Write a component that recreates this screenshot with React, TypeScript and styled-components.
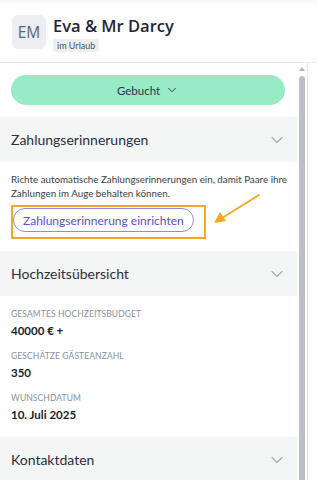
import React from 'react'
import styled, { createGlobalStyle } from 'styled-components'
import { ChevronDown } from 'lucide-react'

const GlobalStyle = createGlobalStyle`
	html, body {
		margin: 0;
		padding: 0;
		background: #fff;
		overflow: hidden;
	}
	body {
		font-family: Lato, 'Open Sans', sans-serif;
		color: #2b2e45;
	}
`

const Page = styled.div`
	width: 317px;
	height: 480px;
	display: flex;
	flex-direction: column;
	overflow: hidden;
`
const Header = styled.header`
	flex: none;
	height: 63px;
	box-sizing: border-box;
	border-top: 3px solid #f5f6f8;
	border-bottom: 1px solid #e7e8eb;
	display: flex;
	align-items: flex-start;
	gap: 7px;
	padding: 12px 12px 0;
`
const Avatar = styled.div`
	width: 34px;
	height: 34px;
	border-radius: 6px;
	background: #eceef1;
	color: #5a6378;
	font-family: 'Open Sans', sans-serif;
	font-size: 15.5px;
	display: flex;
	align-items: center;
	justify-content: center;
`
const NameBlock = styled.div`
	display: flex;
	flex-direction: column;
	align-items: flex-start;
	gap: 2px;
`
const Name = styled.h1`
	margin: 0;
	font-family: 'Open Sans', sans-serif;
	font-size: 16.5px;
	line-height: 22px;
	font-weight: 600;
	color: #1f2638;
`
const Badge = styled.span`
	font-size: 9px;
	line-height: 13px;
	padding: 0 4px;
	border-radius: 3px;
	background: #eceef1;
	color: #4b5263;
`
const Body = styled.div`
	flex: 1;
	display: flex;
	min-height: 0;
`
const Main = styled.div`
	width: 297px;
	overflow: hidden;
`
const Rail = styled.div`
	width: 10px;
	border-right: 1px solid #e6e7ea;
	display: flex;
	flex-direction: column;
	align-items: center;
	padding-top: 4px;
`
const RailArrow = styled.div`
	width: 0;
	height: 0;
	border-left: 3px solid transparent;
	border-right: 3px solid transparent;
	border-bottom: 4px solid #b4b7bd;
	margin-bottom: 5px;
`
const Thumb = styled.div`
	flex: 1;
	width: 6px;
	border-radius: 3px 3px 0 0;
	background: #bdc0c6;
`
const Content = styled.div`
	padding-top: 12px;
`
const StatusButton = styled.button`
	display: flex;
	align-items: center;
	justify-content: center;
	gap: 5px;
	width: 274px;
	height: 30px;
	margin: 0 12px 12px 11px;
	border: none;
	border-radius: 15px;
	background: #98ebc5;
	color: #2d3446;
	font-family: Lato, sans-serif;
	font-size: 11.5px;
	cursor: pointer;
`
const SectionHead = styled.div`
	height: 45px;
	display: flex;
	align-items: center;
	justify-content: space-between;
	padding: 0 10px 0 11px;
	background: #f4f5f5;
	font-size: 14px;
	color: #2b2e45;
`
const SectionBody = styled.div`
	position: relative;
	padding: 10px 4px 12px 11px;
`
const Text = styled.p`
	margin: 0 0 5px;
	font-size: 9.8px;
	line-height: 14px;
	color: #3a3d4a;
`
const Highlight = styled.div`
	display: inline-block;
	border: 2px solid #f7a823;
	padding: 1px 10px 5px 0;
	line-height: 0;
`
const OutlineButton = styled.button`
	height: 24px;
	padding: 0 9px;
	border: 1px solid #8e87ee;
	border-radius: 12px;
	background: #fff;
	color: #5a4fd6;
	font-family: Lato, sans-serif;
	font-size: 12px;
	cursor: pointer;
`
const Arrow = styled.svg`
	position: absolute;
	left: 212px;
	top: 32px;
`
const Facts = styled.dl`
	margin: 0;
	padding: 12px 11px 14px;
`
const Label = styled.dt`
	font-size: 8.5px;
	line-height: 12px;
	letter-spacing: 0.1px;
	text-transform: uppercase;
	color: #8b90a0;
`
const Value = styled.dd`
	margin: 3px 0 11px;
	font-size: 11.5px;
	line-height: 16px;
	font-weight: 700;
	color: #1b1e2d;

	&:last-child {
		margin-bottom: 0;
	}
`

const Section: React.FC<{ title: string; children?: React.ReactNode }> = ({ title, children }) => (
	<section>
		<SectionHead>
			{title}
			<ChevronDown size={20} strokeWidth={1.3} color="#a7aab1" />
		</SectionHead>
		{children}
	</section>
)

const facts = [
	{ label: 'Gesamtes Hochzeitsbudget', value: '40000 € +' },
	{ label: 'Geschätze Gästeanzahl', value: '350' },
	{ label: 'Wunschdatum', value: '10. Juli 2025' },
]

const App: React.FC = () => {
	return (
		<Page>
			<GlobalStyle />
			<Header>
				<Avatar>EM</Avatar>
				<NameBlock>
					<Name>Eva &amp; Mr Darcy</Name>
					<Badge>im Urlaub</Badge>
				</NameBlock>
			</Header>
			<Body>
				<Main>
					<Content>
						<StatusButton>
							Gebucht
							<ChevronDown size={14} strokeWidth={1.6} />
						</StatusButton>
						<Section title="Zahlungserinnerungen">
							<SectionBody>
								<Text>
									Richte automatische Zahlungserinnerungen ein, damit Paare ihre Zahlungen im Auge
									behalten können.
								</Text>
								<Highlight>
									<OutlineButton>Zahlungserinnerung einrichten</OutlineButton>
								</Highlight>
								<Arrow width="50" height="32" viewBox="0 0 50 32">
									<line x1="47" y1="1" x2="10" y2="24" stroke="#f7a823" strokeWidth="2" strokeLinecap="round" />
									<polygon points="2,29 8,18 14,27" fill="#f7a823" />
								</Arrow>
							</SectionBody>
						</Section>
						<Section title="Hochzeitsübersicht">
							<Facts>
								{facts.map(f => (
									<React.Fragment key={f.label}>
										<Label>{f.label}</Label>
										<Value>{f.value}</Value>
									</React.Fragment>
								))}
							</Facts>
						</Section>
						<Section title="Kontaktdaten" />
					</Content>
				</Main>
				<Rail>
					<RailArrow />
					<Thumb />
				</Rail>
			</Body>
		</Page>
	)
}

export default App
